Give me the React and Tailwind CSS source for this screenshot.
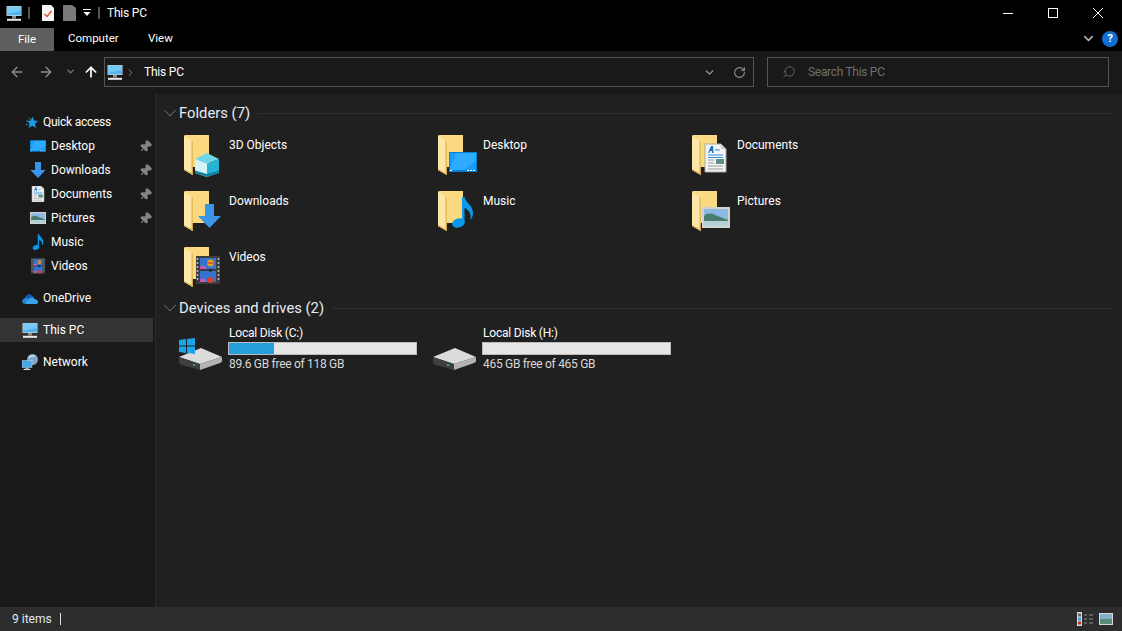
import { ChevronDown, Pin, RotateCw, Search, ArrowLeft, ArrowRight, ArrowUp, ChevronRight } from 'lucide-react';

const folders = [
  { name: '3D Objects', badge: 'cube' },
  { name: 'Desktop', badge: 'desktop' },
  { name: 'Documents', badge: 'document' },
  { name: 'Downloads', badge: 'download' },
  { name: 'Music', badge: 'music' },
  { name: 'Pictures', badge: 'picture' },
  { name: 'Videos', badge: 'video' },
];

const quickLinks = [
  { name: 'Desktop', badge: 'desktop', box: '15 21 28 20', pinned: true },
  { name: 'Downloads', badge: 'download', box: '18 17 23 24', pinned: true },
  { name: 'Documents', badge: 'document', box: '15 13 25 28', pinned: true },
  { name: 'Pictures', badge: 'picture', box: '14 20 28 21', pinned: true },
  { name: 'Music', badge: 'music', box: '14 10 29 31' },
  { name: 'Videos', badge: 'video', box: '16 13 24 28' },
];

function Glyph({ type }) {
  if (type === 'cube') {
    return (
      <g>
        <path d="M27 22 39 28 27 33 15 28Z" fill="#6fd8e8" />
        <path d="M15 28 27 33V46L15 42Z" fill="#d4f4f8" />
        <path d="M27 33 39 28V42L27 46Z" fill="#27b4d4" />
        <path d="M15 39.5 27 43 39 39.5V42L27 46 15 42Z" fill="#12809f" />
      </g>
    );
  }
  if (type === 'desktop') {
    return (
      <g>
        <rect x="15" y="21" width="28" height="20" fill="#0b7dd0" />
        <rect x="16" y="22" width="26" height="17" fill="#199dfb" />
        <path d="M22 22H42V30L30 39H16Z" fill="#2dabff" />
        <path d="M16 39.5h2M33 39.5h2M36 39.5h2M39 39.5h2" stroke="#fff" strokeWidth="1" />
      </g>
    );
  }
  if (type === 'document') {
    return (
      <g>
        <path d="M17 13H33L38 18V41H17Z" fill="#f4f4f4" stroke="#a9a9a9" />
        <path d="M33 13V18H38Z" fill="#c9c9c9" />
        <path d="M20 22 23 15H25L25.5 22H24L23.8 20H22L21.2 22Z" fill="#1b75c9" />
        <path d="M27 19h5M20 24h15M20 26.5h15" stroke="#2c8fdc" strokeWidth="1" />
        <path d="M20 29h6M20 32h6M20 35h15M20 38h15" stroke="#9a9a9a" strokeWidth="1" />
        <rect x="28" y="28" width="8" height="5" fill="#5f8f8a" />
      </g>
    );
  }
  if (type === 'download') {
    return <path d="M25 17H34V29H41L29.5 41 18 29H25Z" fill="#3a94e8" />;
  }
  if (type === 'music') {
    return (
      <g fill="#0998ea">
        <ellipse cx="24.5" cy="36" rx="6.5" ry="4.6" transform="rotate(-18 24.5 36)" />
        <path d="M28 10H30.5C31 15 39 18 39 26 39 29 38 31 36.5 33 37.5 27 35 23 30.5 21V36H28Z" />
      </g>
    );
  }
  if (type === 'picture') {
    return (
      <g>
        <rect x="14" y="20" width="28" height="21" fill="#d2d2d2" />
        <rect x="16" y="22" width="24" height="17" fill="#8db9e0" />
        <path d="M16 29C19 26 24 26 27 28L40 33V35H16Z" fill="#4a7d6e" />
        <rect x="16" y="34" width="24" height="5" fill="#b4d0d6" />
      </g>
    );
  }
  return (
    <g>
      <rect x="16" y="13" width="24" height="28" fill="#3c3c3c" />
      <path d="M17.5 15v24M38.5 15v24" stroke="#b5b5b5" strokeWidth="1.6" strokeDasharray="2 2" />
      <rect x="20" y="15" width="16" height="11" fill="#3473cf" />
      <rect x="20" y="28" width="16" height="11" fill="#3473cf" />
      <path d="M20 23.5l4-1 2 1.5v2H20Z" fill="#c65bb0" />
      <path d="M20 36.5l4-1 2 1.5v2H20Z" fill="#c65bb0" />
      <circle cx="30.5" cy="20" r="3.4" fill="#e3a21c" />
      <path d="M27.5 20h6" stroke="#d83f2e" strokeWidth="1.4" />
      <circle cx="30.5" cy="37" r="3" fill="#d83f2e" />
      <path d="M28.5 26h4l-2 4Z" fill="#222" />
    </g>
  );
}

function FolderIcon({ badge }) {
  return (
    <svg width="48" height="48" viewBox="0 0 48 48" className="shrink-0">
      <path d="M5 4H29V36H8Z" fill="#fbd980" />
      <path d="M4 4 12.7 11V44L4 39Z" fill="#fde7a8" />
      <path d="M12.7 11V44L11.6 43.2V10.2Z" fill="#d7a93f" />
      <path d="M4 39 12.7 44V42.6L4 37.8Z" fill="#e2b552" />
      <Glyph type={badge} />
    </svg>
  );
}

function PcIcon() {
  return (
    <svg width="16" height="15" viewBox="0 0 16 15" className="shrink-0">
      <rect x="0.5" width="15" height="10" fill="#d5d5d5" />
      <rect x="1" y="0.7" width="14" height="8.6" fill="#4fb4f0" />
      <path d="M1 0.7H15V5L1 8Z" fill="#75c9f6" />
      <rect x="6" y="10" width="4" height="2.5" fill="#8e8e8e" />
      <rect x="1" y="12.8" width="14" height="2" fill="#e9e9e9" />
    </svg>
  );
}

function OneDriveIcon() {
  return (
    <svg width="16" height="11" viewBox="0 0 16 11" className="shrink-0">
      <path d="M3 5.5C3.5 2 7 0 9.5 2 11 2.8 12 4 12 5.5Z" fill="#0a5fb4" />
      <path d="M3.5 11C-0.5 11-0.8 6 2.8 5.2 4.5 4.5 6 5 7 6L12 11Z" fill="#2186d6" />
      <path d="M4 11H14.5C17 11 16.5 6.5 13 6.3 11 3.5 7.5 4 6.5 6.5 5 7 4 8.5 4 11Z" fill="#38a3ea" />
    </svg>
  );
}

function NetworkIcon() {
  return (
    <svg width="16" height="16" viewBox="0 0 16 16" className="shrink-0">
      <circle cx="10.5" cy="5.5" r="5.5" fill="#7da7c4" />
      <path d="M7 2C9 .5 13 .5 14.5 3 12 2.5 9 3 7 5Z" fill="#b9d4e6" />
      <rect x="0" y="6.5" width="10" height="7" fill="#49a9e6" stroke="#bcdcf0" strokeWidth="0.5" />
      <rect x="3" y="14" width="4" height="1" fill="#999" />
      <rect x="1.5" y="15" width="7" height="1" fill="#d8d8d8" />
    </svg>
  );
}

function DriveIcon({ system }) {
  return (
    <svg width="48" height="48" viewBox="0 0 48 48" className="shrink-0 mt-[5px]">
      <path d="M3 27 25 18 46 27 24 34Z" fill="#dcdcdc" />
      <path d="M3 27 24 34V40L6 35Q3 34 3 31Z" fill="#3f3f3f" />
      <path d="M24 34 46 27V31Q46 32 44 33L24 40Z" fill="#b4b4b4" />
      <circle cx="18" cy="35" r="1" fill="#35c46a" />
      {system ? (
        <path d="M3 10 10 9V15.5H3ZM11 9 19 8V15.5H11ZM3 16.5H10V23L3 22ZM11 16.5H19V24L11 23Z" fill="#19a7ea" />
      ) : null}
    </svg>
  );
}

function SideRow({ icon, label, pinned, className = 'pl-[30px] gap-[5px]', spaced }) {
  return (
    <div className={`flex h-6 items-center ${className} ${spaced ? 'mt-2' : ''}`}>
      {icon}
      <span className="flex-1">{label}</span>
      {pinned ? <Pin size={13} fill="#858585" className="mr-[3px] rotate-45 text-[#858585]" /> : null}
    </div>
  );
}

function GroupHeader({ label }) {
  return (
    <div className="flex h-[18px] items-center pl-[3px] pr-[10px]">
      <ChevronDown size={22} strokeWidth={1.1} className="-mr-[2px] shrink-0 text-[#6a6a6a]" />
      <span className="mr-[7px] mt-px text-[14.8px] text-[#e4edf6]">{label}</span>
      <div className="h-px flex-1 bg-[#2f2f2f]" />
    </div>
  );
}

function Drive({ name, free, used, system }) {
  return (
    <div className="flex w-[254px]">
      <DriveIcon system={system} />
      <div className="ml-1 w-[189px]">
        <div className="h-[16px] pl-px leading-4 tracking-[-0.2px]">{name}</div>
        <div className="mt-px h-[13px] border border-[#bcbcbc] bg-[#e6e6e6]">
          <div className="h-full bg-[#26a0da]" style={{ width: used }} />
        </div>
        <div className="mt-px h-4 pl-px leading-4 tracking-[-0.3px] text-[#d8d8d8]">{free}</div>
      </div>
    </div>
  );
}

export default function App() {
  return (
    <div className="flex h-[631px] w-[1122px] flex-col overflow-hidden bg-[#202020] font-['Roboto',sans-serif] text-[12px] text-white">
      <div className="flex h-[26px] items-center bg-black">
        <div className="ml-[6px]"><PcIcon /></div>
        <div className="ml-[6px] h-[12px] w-[2px] bg-[#555]" />
        <svg width="14" height="16" viewBox="0 0 14 16" className="ml-[11px]">
          <path d="M1 0H10L13 3V16H1Z" fill="#f5f5f5" />
          <path d="M3.5 9 6 11.5 10.5 6" stroke="#e2562c" strokeWidth="1.5" fill="none" />
        </svg>
        <svg width="14" height="16" viewBox="0 0 14 16" className="ml-[8px]">
          <path d="M0 0H9L13 3V16H0Z" fill="#7a7a7a" />
        </svg>
        <svg width="8" height="8" viewBox="0 0 8 8" className="ml-[6px]">
          <path d="M0 0H8V1H0ZM0.5 3H7.5L4 7Z" fill="#fff" />
        </svg>
        <div className="ml-[7px] h-[12px] w-[2px] bg-[#555]" />
        <span className="ml-[7px] tracking-[-0.2px]">This PC</span>
        <div className="ml-auto flex">
          <div className="flex w-[45px] justify-center">
            <svg width="10" height="10" viewBox="0 0 10 10"><path d="M0 5.5H10" stroke="#fff" /></svg>
          </div>
          <div className="flex w-[45px] justify-center">
            <svg width="10" height="10" viewBox="0 0 10 10"><rect x="0.5" y="0.5" width="9" height="9" fill="none" stroke="#fff" /></svg>
          </div>
          <div className="flex w-[46px] justify-center">
            <svg width="10" height="10" viewBox="0 0 10 10"><path d="M0 0 10 10M10 0 0 10" stroke="#fff" /></svg>
          </div>
          <div className="w-px" />
        </div>
      </div>

      <div className="flex h-[25px] items-stretch bg-black text-[11.5px]">
        <div className="mt-[2px] flex w-[54px] items-center justify-center bg-[#5e5e5e]">File</div>
        <div className="ml-[14px] flex w-[80px] items-center">Computer</div>
        <div className="flex items-center">View</div>
        <div className="ml-auto flex items-center pr-[4px]">
          <ChevronDown size={15} strokeWidth={2.5} className="mr-[6px] text-[#b4b4b4]" />
          <div className="flex h-[16px] w-[16px] items-center justify-center rounded-full bg-[#0f6fd0] font-bold leading-none">?</div>
        </div>
      </div>

      <div className="flex h-[43px] items-start bg-[#191919] pt-[6px]">
        <ArrowLeft size={16} className="ml-[9px] mt-[7px] text-[#8f8f8f]" />
        <ArrowRight size={16} className="ml-[13px] mt-[7px] text-[#8f8f8f]" />
        <ChevronDown size={11} strokeWidth={3} className="ml-[11px] mt-[9px] text-[#777]" />
        <ArrowUp size={16} strokeWidth={2.6} className="ml-[7px] mt-[7px] text-white" />
        <div className="ml-[5px] flex h-[30px] w-[650px] items-center border border-[#555] pl-[2px]">
          <PcIcon />
          <ChevronRight size={11} className="ml-[2px] text-[#8a8a8a]" />
          <span className="ml-[8px] flex-1 tracking-[-0.2px]">This PC</span>
          <ChevronDown size={13} strokeWidth={2.6} className="mr-[17px] text-[#9a9a9a]" />
          <RotateCw size={13} strokeWidth={2} className="mr-[7px] text-[#8f8f8f]" />
        </div>
        <div className="ml-[13px] flex h-[30px] w-[342px] items-center border border-[#555] pl-[14px] text-[#6f6f6f]">
          <Search size={14} strokeWidth={1.5} className="-scale-x-100" />
          <span className="ml-[12px] tracking-[-0.3px]">Search This PC</span>
        </div>
      </div>

      <div className="flex min-h-0 flex-1">
        <div className="w-[155px] shrink-0 bg-[#191919] pt-4">
          <SideRow
            className="pl-[25px] gap-[5px] tracking-[-0.25px]"
            label="Quick access"
            icon={
              <svg width="13" height="13" viewBox="0 0 13 13" className="shrink-0">
                <path d="M7.5 0.5 9 4.5 13 5 10 7.8 11 12 7.3 9.8 3.5 12 4.5 7.8 2.5 5 5.8 4.5Z" fill="#1e9be8" />
                <path d="M4 1.5 5.5 4M1 5H3M0.5 9 3 8" stroke="#1e9be8" strokeWidth="0.8" />
              </svg>
            }
          />
          {quickLinks.map((item) => (
            <SideRow
              key={item.name}
              label={item.name}
              pinned={item.pinned}
              icon={
                <svg width="16" height="16" viewBox={item.box} className="shrink-0">
                  <Glyph type={item.badge} />
                </svg>
              }
            />
          ))}
          <SideRow spaced className="pl-[22px] gap-[5px]" label="OneDrive" icon={<OneDriveIcon />} />
          <div className="mt-2 w-[153px] bg-[#333]">
            <SideRow className="pl-[22px] gap-[5px]" label="This PC" icon={<PcIcon />} />
          </div>
          <SideRow spaced className="pl-[22px] gap-[5px]" label="Network" icon={<NetworkIcon />} />
        </div>

        <div className="w-px bg-[#2b2b2b]" />

        <div className="flex-1 pt-[10px]">
          <GroupHeader label="Folders (7)" />
          <div className="mt-[9px] grid grid-cols-[254px_254px_254px] pl-[24px]">
            {folders.map((folder) => (
              <div key={folder.name} className="flex h-14">
                <FolderIcon badge={folder.badge} />
                <span className="ml-px mt-[6px] leading-4">{folder.name}</span>
              </div>
            ))}
          </div>
          <GroupHeader label="Devices and drives (2)" />
          <div className="mt-2 flex pl-[20px]">
            <Drive name="Local Disk (C:)" free="89.6 GB free of 118 GB" used="24%" system />
            <Drive name="Local Disk (H:)" free="465 GB free of 465 GB" used="0%" />
          </div>
        </div>
      </div>

      <div className="flex h-6 items-center bg-[#2d2d2d] pl-3 text-[#dfe8f0]">
        <span className="w-12">9 items</span>
        <div className="h-[12px] w-px bg-[#dcdcdc]" />
        <div className="ml-auto flex items-center pr-[9px]">
          <svg width="16" height="14" viewBox="0 0 16 14">
            <rect x="0" y="0" width="5" height="14" fill="#d8d8d8" />
            <rect x="1" y="1.5" width="3" height="3" fill="#666" />
            <rect x="1" y="5.5" width="3" height="3" fill="#3ba7d6" />
            <rect x="1" y="9.5" width="3" height="3" fill="#a83a20" />
            <path d="M7 3h3M12 3h4M7 7h3M12 7h4M7 11h3M12 11h4" stroke="#8c8c8c" strokeWidth="1" />
          </svg>
          <svg width="14" height="12" viewBox="0 0 14 12" className="ml-[6px]">
            <rect width="14" height="12" fill="#d8d8d8" />
            <rect x="1" y="1" width="12" height="10" fill="#82b0c8" />
            <rect x="1" y="6" width="12" height="5" fill="#5b8b79" />
          </svg>
        </div>
      </div>
    </div>
  );
}
